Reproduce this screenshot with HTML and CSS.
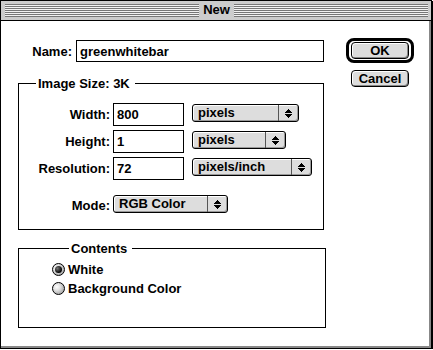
FILE: index.html
```html
<!DOCTYPE html>
<html lang="en">
<head>
    <meta charset="UTF-8">
    <meta name="viewport" content="width=device-width, initial-scale=1.0">
    <title>New</title>
    <link rel="stylesheet" href="styles.css">
</head>
<body>
    <div class="window">
        <div class="titlebar">
            <div class="stripes"></div>
            <span class="title">New</span>
            <div class="stripes"></div>
        </div>
        <div class="dialog">
            <div class="form">
                <div class="name-row">
                    <label class="name-label" for="name">Name:</label>
                    <input id="name" class="field name-field" type="text" value="greenwhitebar">
                </div>

                <fieldset class="group size-group">
                    <legend>Image Size: 3K</legend>
                    <div class="rows">
                        <div class="row">
                            <span class="label">Width:</span>
                            <input class="field num-field" type="text" value="800">
                            <div class="popup" style="width: 107px;">
                                <span class="popup-text">pixels</span>
                                <span class="popup-arrow"><svg width="7" height="9" viewBox="0 0 7 9"><path d="M3 0h1v1h1v1h1v1h1v1H0V3h1V2h1V1h1z M0 5h7v1H6v1H5v1H4v1H3V8H2V7H1V6H0z" fill="#000"/></svg></span>
                            </div>
                        </div>
                        <div class="row">
                            <span class="label">Height:</span>
                            <input class="field num-field" type="text" value="1">
                            <div class="popup" style="width: 94px;">
                                <span class="popup-text">pixels</span>
                                <span class="popup-arrow"><svg width="7" height="9" viewBox="0 0 7 9"><path d="M3 0h1v1h1v1h1v1h1v1H0V3h1V2h1V1h1z M0 5h7v1H6v1H5v1H4v1H3V8H2V7H1V6H0z" fill="#000"/></svg></span>
                            </div>
                        </div>
                        <div class="row">
                            <span class="label">Resolution:</span>
                            <input class="field num-field" type="text" value="72">
                            <div class="popup" style="width: 120px;">
                                <span class="popup-text">pixels/inch</span>
                                <span class="popup-arrow"><svg width="7" height="9" viewBox="0 0 7 9"><path d="M3 0h1v1h1v1h1v1h1v1H0V3h1V2h1V1h1z M0 5h7v1H6v1H5v1H4v1H3V8H2V7H1V6H0z" fill="#000"/></svg></span>
                            </div>
                        </div>
                        <div class="row mode-row">
                            <span class="label">Mode:</span>
                            <div class="popup mode-popup" style="width: 115px;">
                                <span class="popup-text">RGB Color</span>
                                <span class="popup-arrow"><svg width="7" height="9" viewBox="0 0 7 9"><path d="M3 0h1v1h1v1h1v1h1v1H0V3h1V2h1V1h1z M0 5h7v1H6v1H5v1H4v1H3V8H2V7H1V6H0z" fill="#000"/></svg></span>
                            </div>
                        </div>
                    </div>
                </fieldset>

                <fieldset class="group contents-group">
                    <legend>Contents</legend>
                    <div class="radio-row">
                        <span class="radio checked"></span>
                        <span>White</span>
                    </div>
                    <div class="radio-row">
                        <span class="radio"></span>
                        <span>Background Color</span>
                    </div>
                </fieldset>
            </div>

            <div class="buttons">
                <div class="default-ring">
                    <button class="btn" type="button">OK</button>
                </div>
                <button class="btn cancel" type="button">Cancel</button>
            </div>
        </div>
    </div>
</body>
</html>
```

FILE: styles.css
```css
/* Classic platinum style dialog */
body {
    margin: 0;
    background-color: #fff;
    font-family: "Liberation Sans", Arial, sans-serif;
    font-size: 13px;
    font-weight: bold;
    color: #000;
}

.window {
    box-sizing: border-box;
    width: 432px;
    height: 349px;
    border: 1px solid #000;
    box-shadow: 1px 1px 0 #000;
    display: flex;
    flex-direction: column;
}

/* Title bar */
.titlebar {
    height: 20px;
    background-color: #cccccc;
    border-bottom: 1px solid #000;
    display: flex;
    align-items: flex-start;
    padding: 3px 3px 0 4px;
    box-sizing: border-box;
}

.stripes {
    flex: 1;
    height: 13px;
    background: repeating-linear-gradient(to bottom, #777 0 1px, #f2f2f2 1px 2px);
}

.title {
    padding: 0 4px;
    line-height: 14px;
    margin-top: -1px;
}

/* Dialog body */
.dialog {
    flex: 1;
    display: flex;
    background-color: #fff;
    border-right: 2px solid #888;
    border-bottom: 2px solid #888;
    padding-left: 17px;
}

.form {
    width: 306px;
    padding-top: 19px;
}

.name-row {
    display: flex;
    align-items: center;
    height: 22px;
}

.name-label {
    width: 54px;
    text-align: right;
    margin-right: 4px;
}

.field {
    box-sizing: border-box;
    border: 1px solid #000;
    border-radius: 0;
    background: #fff;
    font: inherit;
    color: #000;
    padding: 0 3px;
    margin: 0;
    outline: none;
}

.name-field {
    width: 248px;
    height: 22px;
}

/* Group boxes */
.group {
    border: 1px solid #000;
    margin: 0;
    padding: 0;
}

.group legend {
    margin-left: 17px;
    padding: 0 5px 0 2px;
    line-height: 15px;
}

.size-group {
    margin-top: 14px;
    padding: 12px 0 12px;
}

.rows {
    display: flex;
    flex-direction: column;
    gap: 4px;
}

.row {
    display: flex;
    align-items: flex-start;
    height: 23px;
}

.row .label {
    width: 91px;
    margin-right: 3px;
    text-align: right;
    line-height: 23px;
}

.num-field {
    width: 71px;
    height: 23px;
    margin-right: 8px;
}

.mode-row {
    margin-top: 10px;
}

/* Popup menus */
.popup {
    box-sizing: border-box;
    height: 18px;
    margin-top: 1px;
    display: flex;
    border: 1px solid #000;
    border-radius: 3px;
    background-color: #dddddd;
    box-shadow: inset 1px 1px 0 #fff, inset -1px -1px 0 #999;
}

.popup-text {
    flex: 1;
    padding-left: 5px;
    line-height: 16px;
}

.popup-arrow {
    width: 19px;
    border-left: 1px solid #555;
    display: flex;
    align-items: center;
    justify-content: center;
}

.mode-popup {
    margin-top: 1px;
}

/* Contents group */
.contents-group {
    margin-top: 11px;
    margin-right: -2px;
    padding: 4px 0 29px 33px;
}

.radio-row {
    display: flex;
    align-items: center;
    height: 19px;
}

.radio {
    box-sizing: border-box;
    width: 13px;
    height: 13px;
    border: 1px solid #000;
    border-radius: 50%;
    margin-right: 3px;
    background: radial-gradient(circle at 35% 35%, #fff 0, #e0e0e0 35%, #888 100%);
    display: flex;
    align-items: center;
    justify-content: center;
}

.radio.checked::after {
    content: "";
    width: 7px;
    height: 7px;
    border-radius: 50%;
    background: radial-gradient(circle at 35% 35%, #777 0, #000 70%);
}

/* Buttons */
.buttons {
    margin-left: 22px;
    padding-top: 17px;
    display: flex;
    flex-direction: column;
    align-items: center;
}

.default-ring {
    border: 3px solid #000;
    border-radius: 8px;
    padding: 1px 2px;
    display: flex;
}

.btn {
    box-sizing: border-box;
    width: 58px;
    height: 17px;
    padding: 0;
    border: 1px solid #000;
    border-radius: 4px;
    background-color: #dddddd;
    box-shadow: inset 1px 1px 0 #fff, inset -1px -1px 0 #888;
    font: inherit;
    color: #000;
    line-height: 15px;
}

.cancel {
    margin-top: 7px;
}
```
